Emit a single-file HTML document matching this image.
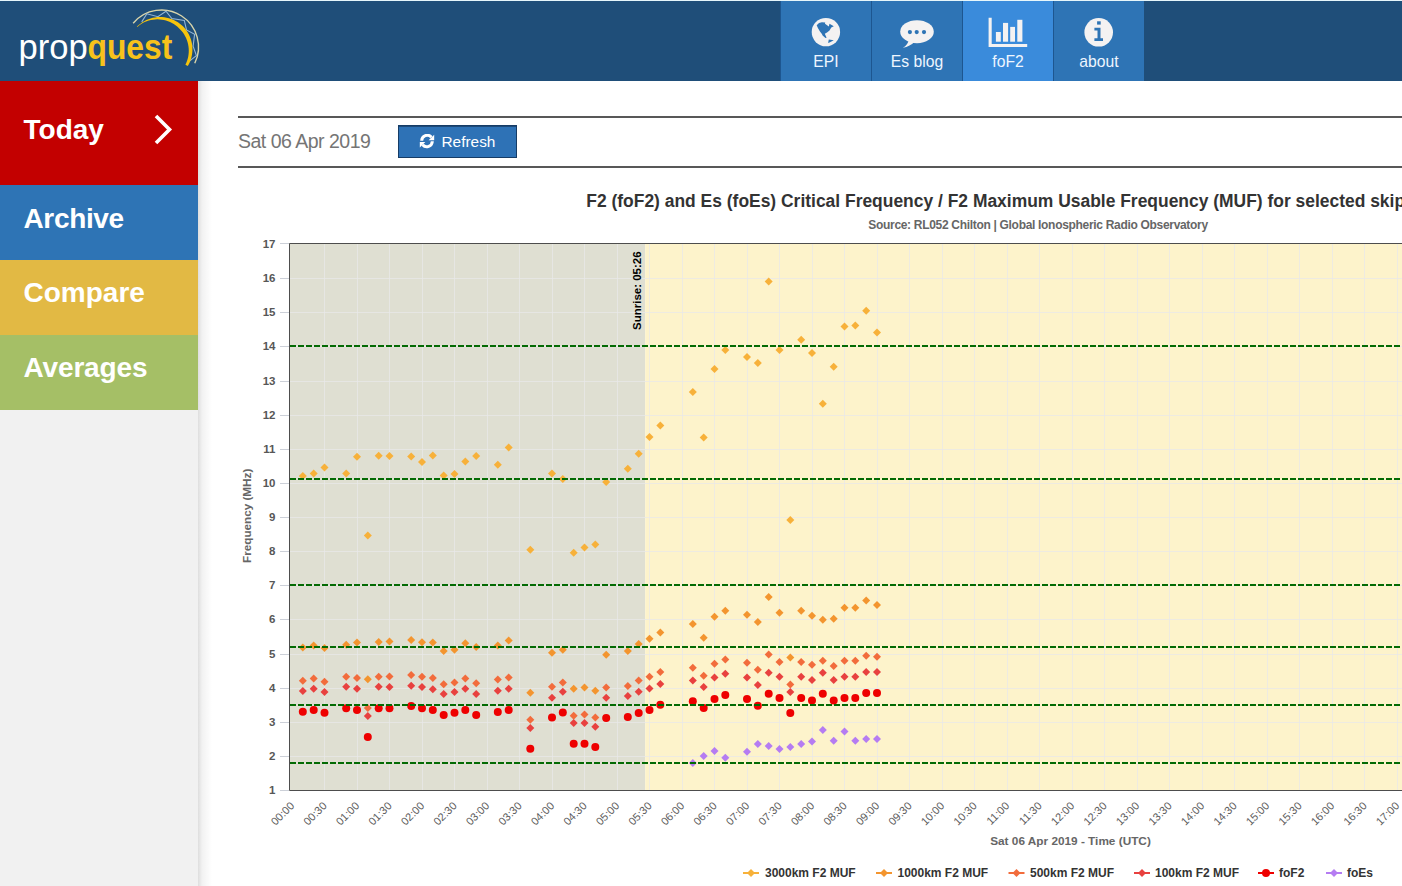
<!DOCTYPE html>
<html><head><meta charset="utf-8">
<style>
*{margin:0;padding:0;box-sizing:border-box}
html,body{width:1402px;height:886px;overflow:hidden;background:#fff;font-family:"Liberation Sans",sans-serif}
#top{position:absolute;left:0;top:0;width:1402px;height:1px;background:#e6f6fb}
#hdr{position:absolute;left:0;top:1px;width:1402px;height:80px;background:#1f4e79}
.nav{position:absolute;top:1px;height:80px;width:91px;background:#2e74b5;border-left:1px solid #1d5690;color:#eef6ff;text-align:center}
.nav.act{background:#3a8bdb}
.nav span{position:absolute;left:0;right:0;top:52px;font-size:15.7px;line-height:18px}
.nav svg{position:absolute;left:0;top:-1px}
#side{position:absolute;left:0;top:81px;width:198px;height:805px;background:#f1f1f1}
.sb{position:absolute;left:0;width:198px;color:#fff;font-weight:bold;font-size:29px}
.sb span{position:absolute;left:24px}
#shadow{position:absolute;left:198px;top:81px;width:14px;height:805px;background:linear-gradient(to right,rgba(0,0,0,0.13),rgba(0,0,0,0.05) 30%,rgba(0,0,0,0))}
#rule1{position:absolute;left:238px;top:116px;width:1164px;height:2px;background:#585858}
#rule2{position:absolute;left:238px;top:166px;width:1164px;height:2px;background:#585858}
#date{position:absolute;left:238px;top:130px;font-size:19px;color:#757575;line-height:22px}
#btn{position:absolute;left:398px;top:125px;width:119px;height:33px;background:#2e72b6;border:1px solid #163c66;box-shadow:inset 0 1px 0 #1d4a7a;color:#fff;font-size:16.5px}
#btn span{position:absolute;left:42px;top:7px;line-height:18px}
#chart{position:absolute;left:0;top:0}
</style></head><body>
<div id="top"></div>
<div id="hdr"></div>
<svg style="position:absolute;left:0;top:0" width="240" height="81">
 <text x="18.45" y="59" font-size="34.6" fill="#fff" font-family="Liberation Sans">prop</text>
 <text transform="translate(87.5,59) scale(1,1.1)" font-size="31.8" font-weight="bold" fill="#f7c21b" font-family="Liberation Sans">quest</text>
 <path d="M133.16 23.22 A37 37 0 0 1 194.76 63.22" stroke="#e3dcae" stroke-width="1.4" fill="none" opacity="0.95"/>
<path d="M141.7 21.9 L146.9 13.8 L157.9 16.7 L166 11.2 L171.8 18.6 L184.3 20.4 L186.5 29.9 L194.6 34.3 L193.1 46.1 L196.4 55.6 L188 62.2" stroke="#93b6d6" stroke-width="1.1" fill="none"/>
<path d="M136.91 26.52 L138.62 25.04 L140.43 23.67 L142.27 22.33 L144.22 21.14 L146.25 20.08 L148.37 19.18 L150.54 18.42 L152.78 17.82 L155.06 17.39 L157.36 17.11 L159.69 17.01 L162.03 17.06 L164.36 17.29 L166.68 17.68 L168.97 18.24 L171.21 18.96 L173.41 19.84 L175.54 20.88 L177.60 22.07 L179.58 23.41 L181.45 24.88 L183.23 26.49 L184.82 28.28 L186.29 30.18 L187.61 32.17 L188.78 34.26 L189.80 36.42 L190.66 38.66 L191.35 40.94 L191.88 43.27 L192.23 45.63 L192.41 48.00 L192.42 50.38 L192.26 52.75 L191.93 55.10 L191.42 57.41 L190.76 59.68 L189.93 61.89 L188.94 64.02 L187.81 66.08 L185.42 64.76 L186.32 62.80 L187.09 60.80 L187.71 58.76 L188.20 56.68 L188.53 54.58 L188.73 52.46 L188.77 50.34 L188.67 48.23 L188.43 46.13 L188.05 44.05 L187.52 42.01 L186.86 40.01 L186.06 38.06 L185.13 36.18 L184.07 34.36 L182.90 32.62 L181.60 30.97 L180.20 29.41 L178.74 27.89 L177.18 26.47 L175.52 25.17 L173.76 23.98 L171.92 22.92 L170.01 21.99 L168.02 21.19 L165.99 20.53 L163.90 20.01 L161.78 19.64 L159.63 19.42 L157.46 19.35 L155.29 19.43 L153.12 19.66 L150.97 20.05 L148.84 20.58 L146.75 21.27 L144.70 22.10 L142.71 23.07 L140.78 24.17 L139.00 25.50 L137.32 26.96Z" fill="#f6c40c"/>
</svg>
<div class="nav" style="left:780px">
 <svg width="91" height="80"><circle cx="44.9" cy="32.1" r="14.2" fill="#f4f2f2"/>
 <path d="M35.7 25.2 L38 23 L40.9 22.3 L44.2 22.5 L44 23.8 L47.8 26.5 L48.5 23.8 L52.8 26.3 L50.3 27.6 L48.5 30.4 L46 32.6 L43.8 33.7 L45.6 37.7 L44.5 38 L41.6 35.5 L40.9 34.1 L38.8 31.2 L36.9 27.9 Z M47.8 39.5 L52.8 40.2 L48.5 42.4 L47.1 43.1 Z" fill="#2e74b5"/></svg>
 <span>EPI</span></div>
<div class="nav" style="left:871px">
 <svg width="91" height="80"><ellipse cx="45" cy="31.7" rx="16.8" ry="11.5" fill="#f4f2f2"/>
 <path d="M30.9 47.8 Q36 45 37 39 L43 41.5 Q38 46.5 30.9 47.8 Z" fill="#f4f2f2"/>
 <circle cx="37.9" cy="32.1" r="2.1" fill="#2e74b5"/><circle cx="44.7" cy="32.1" r="2.1" fill="#2e74b5"/><circle cx="52" cy="32.1" r="2.1" fill="#2e74b5"/></svg>
 <span>Es blog</span></div>
<div class="nav act" style="left:962px">
 <svg width="91" height="80"><path d="M25.6 17.8 H28.7 V43.9 H64.2 V47 H25.6 Z" fill="#f4f2f2"/>
 <rect x="32.9" y="32" width="4.9" height="9.7" fill="#f4f2f2"/><rect x="40" y="22.9" width="5.1" height="18.8" fill="#f4f2f2"/><rect x="47.2" y="26.9" width="4.8" height="14.8" fill="#f4f2f2"/><rect x="54.3" y="19.8" width="5.1" height="21.9" fill="#f4f2f2"/></svg>
 <span>foF2</span></div>
<div class="nav" style="left:1053px">
 <svg width="91" height="80"><circle cx="44.7" cy="32.3" r="14.3" fill="#f4f2f2"/>
 <rect x="43.1" y="21.3" width="3.6" height="3.3" fill="#2e74b5"/><path d="M40.4 27.8 H46.5 V38.2 H49 V40.9 H40.4 V38.2 H43.5 V30.5 H40.4 Z" fill="#2e74b5"/></svg>
 <span>about</span></div>
<div id="side"></div>
<div class="sb" style="top:81px;height:104px;background:#c30000"></div>
<div class="sb" style="top:185px;height:75px;background:#2e74b5"></div>
<div class="sb" style="top:260px;height:75px;background:#e2b944"></div>
<div class="sb" style="top:335px;height:75px;background:#a5bf66"></div>
<svg style="position:absolute;left:0;top:0" width="200" height="420" font-family="Liberation Sans" font-weight="bold" font-size="28" fill="#fff">
 <text x="23.5" y="139">Today</text>
 <text x="23.5" y="228" letter-spacing="-0.35">Archive</text>
 <text x="23.5" y="302">Compare</text>
 <text x="23.5" y="377" letter-spacing="-0.15">Averages</text>
 <path d="M156 116 L169.5 129.5 L156 143" stroke="#fff" stroke-width="3.6" fill="none"/>
</svg>
<div id="shadow"></div>
<div id="rule1"></div>
<svg style="position:absolute;left:0;top:0" width="400" height="170"><text x="238" y="147.8" font-size="19.5" letter-spacing="-0.5" fill="#757575" font-family="Liberation Sans">Sat 06 Apr 2019</text></svg>
<div id="btn"><svg style="position:absolute;left:20px;top:8px" width="16" height="16"><path d="M2.7 6.8 A5.5 5.5 0 0 1 12.4 3.27" stroke="#fff" stroke-width="3" fill="none"/><path d="M15.2 0.8 V6.2 H9.6 Z" fill="#fff"/><path d="M13.3 7.2 A5.5 5.5 0 0 1 3.59 10.73" stroke="#fff" stroke-width="3" fill="none"/><path d="M0.8 13.4 V7.9 H6.4 Z" fill="#fff"/></svg><svg style="position:absolute;left:0;top:0" width="119" height="33"><text x="42.5" y="21.2" font-size="15.4" fill="#fff" font-family="Liberation Sans">Refresh</text></svg></div>
<div id="rule2"></div>
<svg id="chart" width="1402" height="886" font-family="Liberation Sans">
<rect x="289" y="243" width="356.2" height="547" fill="#dfdfd2"/>
<rect x="645.2" y="243" width="766.8" height="547" fill="#fdf3cb"/>
<path d="M289 756.5H1412 M289 722.5H1412 M289 688.5H1412 M289 654.5H1412 M289 619.5H1412 M289 585.5H1412 M289 551.5H1412 M289 517.5H1412 M289 483.5H1412 M289 449.5H1412 M289 415.5H1412 M289 381.5H1412 M289 346.5H1412 M289 312.5H1412 M289 278.5H1412 M324.5 243V790 M357.5 243V790 M389.5 243V790 M422.5 243V790 M454.5 243V790 M487.5 243V790 M519.5 243V790 M552.5 243V790 M584.5 243V790 M617.5 243V790 M649.5 243V790 M682.5 243V790 M714.5 243V790 M747.5 243V790 M779.5 243V790 M812.5 243V790 M844.5 243V790 M877.5 243V790 M909.5 243V790 M942.5 243V790 M974.5 243V790 M1007.5 243V790 M1039.5 243V790 M1072.5 243V790 M1104.5 243V790 M1137.5 243V790 M1169.5 243V790 M1202.5 243V790 M1234.5 243V790 M1267.5 243V790 M1299.5 243V790 M1332.5 243V790 M1364.5 243V790 M1397.5 243V790 M1429.5 243V790" stroke="#e8e8e8" stroke-width="1" fill="none" opacity="0.75"/>
<text transform="translate(641,330) rotate(-90)" font-size="11.5" font-weight="bold" fill="#000">Sunrise: 05:26</text>
<path d="M302.8 472.0L306.8 476.0L302.8 480.0L298.8 476.0Z" fill="#f7b13a"/>
<path d="M313.7 469.6L317.7 473.6L313.7 477.6L309.7 473.6Z" fill="#f7b13a"/>
<path d="M324.5 463.6L328.5 467.6L324.5 471.6L320.5 467.6Z" fill="#f7b13a"/>
<path d="M346.2 469.6L350.2 473.6L346.2 477.6L342.2 473.6Z" fill="#f7b13a"/>
<path d="M357.0 452.7L361.0 456.7L357.0 460.7L353.0 456.7Z" fill="#f7b13a"/>
<path d="M367.8 531.6L371.8 535.6L367.8 539.6L363.8 535.6Z" fill="#f7b13a"/>
<path d="M378.7 451.7L382.7 455.7L378.7 459.7L374.7 455.7Z" fill="#f7b13a"/>
<path d="M389.5 452.1L393.5 456.1L389.5 460.1L385.5 456.1Z" fill="#f7b13a"/>
<path d="M411.2 452.4L415.2 456.4L411.2 460.4L407.2 456.4Z" fill="#f7b13a"/>
<path d="M422.0 458.0L426.0 462.0L422.0 466.0L418.0 462.0Z" fill="#f7b13a"/>
<path d="M432.8 451.6L436.8 455.6L432.8 459.6L428.8 455.6Z" fill="#f7b13a"/>
<path d="M443.7 471.6L447.7 475.6L443.7 479.6L439.7 475.6Z" fill="#f7b13a"/>
<path d="M454.5 469.9L458.5 473.9L454.5 477.9L450.5 473.9Z" fill="#f7b13a"/>
<path d="M465.3 457.6L469.3 461.6L465.3 465.6L461.3 461.6Z" fill="#f7b13a"/>
<path d="M476.2 452.0L480.2 456.0L476.2 460.0L472.2 456.0Z" fill="#f7b13a"/>
<path d="M497.8 460.8L501.8 464.8L497.8 468.8L493.8 464.8Z" fill="#f7b13a"/>
<path d="M508.7 443.4L512.7 447.4L508.7 451.4L504.7 447.4Z" fill="#f7b13a"/>
<path d="M530.3 545.7L534.3 549.7L530.3 553.7L526.3 549.7Z" fill="#f7b13a"/>
<path d="M552.0 469.6L556.0 473.6L552.0 477.6L548.0 473.6Z" fill="#f7b13a"/>
<path d="M562.8 475.0L566.8 479.0L562.8 483.0L558.8 479.0Z" fill="#f7b13a"/>
<path d="M573.7 548.7L577.7 552.7L573.7 556.7L569.7 552.7Z" fill="#f7b13a"/>
<path d="M584.5 543.5L588.5 547.5L584.5 551.5L580.5 547.5Z" fill="#f7b13a"/>
<path d="M595.3 540.6L599.3 544.6L595.3 548.6L591.3 544.6Z" fill="#f7b13a"/>
<path d="M606.2 478.1L610.2 482.1L606.2 486.1L602.2 482.1Z" fill="#f7b13a"/>
<path d="M627.8 464.8L631.8 468.8L627.8 472.8L623.8 468.8Z" fill="#f7b13a"/>
<path d="M638.7 449.7L642.7 453.7L638.7 457.7L634.7 453.7Z" fill="#f7b13a"/>
<path d="M649.5 433.0L653.5 437.0L649.5 441.0L645.5 437.0Z" fill="#f7b13a"/>
<path d="M660.3 421.6L664.3 425.6L660.3 429.6L656.3 425.6Z" fill="#f7b13a"/>
<path d="M692.8 388.0L696.8 392.0L692.8 396.0L688.8 392.0Z" fill="#f7b13a"/>
<path d="M703.7 433.6L707.7 437.6L703.7 441.6L699.7 437.6Z" fill="#f7b13a"/>
<path d="M714.5 365.0L718.5 369.0L714.5 373.0L710.5 369.0Z" fill="#f7b13a"/>
<path d="M725.3 346.1L729.3 350.1L725.3 354.1L721.3 350.1Z" fill="#f7b13a"/>
<path d="M747.0 353.0L751.0 357.0L747.0 361.0L743.0 357.0Z" fill="#f7b13a"/>
<path d="M757.8 359.0L761.8 363.0L757.8 367.0L753.8 363.0Z" fill="#f7b13a"/>
<path d="M768.7 277.5L772.7 281.5L768.7 285.5L764.7 281.5Z" fill="#f7b13a"/>
<path d="M779.5 346.1L783.5 350.1L779.5 354.1L775.5 350.1Z" fill="#f7b13a"/>
<path d="M790.3 515.9L794.3 519.9L790.3 523.9L786.3 519.9Z" fill="#f7b13a"/>
<path d="M801.2 335.8L805.2 339.8L801.2 343.8L797.2 339.8Z" fill="#f7b13a"/>
<path d="M812.0 348.9L816.0 352.9L812.0 356.9L808.0 352.9Z" fill="#f7b13a"/>
<path d="M822.8 399.7L826.8 403.7L822.8 407.7L818.8 403.7Z" fill="#f7b13a"/>
<path d="M833.7 362.8L837.7 366.8L833.7 370.8L829.7 366.8Z" fill="#f7b13a"/>
<path d="M844.5 322.5L848.5 326.5L844.5 330.5L840.5 326.5Z" fill="#f7b13a"/>
<path d="M855.3 321.4L859.3 325.4L855.3 329.4L851.3 325.4Z" fill="#f7b13a"/>
<path d="M866.2 306.8L870.2 310.8L866.2 314.8L862.2 310.8Z" fill="#f7b13a"/>
<path d="M877.0 328.5L881.0 332.5L877.0 336.5L873.0 332.5Z" fill="#f7b13a"/>
<path d="M302.8 643.6L306.8 647.6L302.8 651.6L298.8 647.6Z" fill="#f3952f"/>
<path d="M313.7 641.5L317.7 645.5L313.7 649.5L309.7 645.5Z" fill="#f3952f"/>
<path d="M324.5 643.9L328.5 647.9L324.5 651.9L320.5 647.9Z" fill="#f3952f"/>
<path d="M346.2 640.7L350.2 644.7L346.2 648.7L342.2 644.7Z" fill="#f3952f"/>
<path d="M357.0 638.6L361.0 642.6L357.0 646.6L353.0 642.6Z" fill="#f3952f"/>
<path d="M367.8 675.3L371.8 679.3L367.8 683.3L363.8 679.3Z" fill="#f3952f"/>
<path d="M378.7 637.9L382.7 641.9L378.7 645.9L374.7 641.9Z" fill="#f3952f"/>
<path d="M389.5 637.5L393.5 641.5L389.5 645.5L385.5 641.5Z" fill="#f3952f"/>
<path d="M411.2 636.1L415.2 640.1L411.2 644.1L407.2 640.1Z" fill="#f3952f"/>
<path d="M422.0 638.2L426.0 642.2L422.0 646.2L418.0 642.2Z" fill="#f3952f"/>
<path d="M432.8 638.6L436.8 642.6L432.8 646.6L428.8 642.6Z" fill="#f3952f"/>
<path d="M443.7 647.1L447.7 651.1L443.7 655.1L439.7 651.1Z" fill="#f3952f"/>
<path d="M454.5 645.7L458.5 649.7L454.5 653.7L450.5 649.7Z" fill="#f3952f"/>
<path d="M465.3 639.3L469.3 643.3L465.3 647.3L461.3 643.3Z" fill="#f3952f"/>
<path d="M476.2 643.0L480.2 647.0L476.2 651.0L472.2 647.0Z" fill="#f3952f"/>
<path d="M497.8 641.6L501.8 645.6L497.8 649.6L493.8 645.6Z" fill="#f3952f"/>
<path d="M508.7 636.5L512.7 640.5L508.7 644.5L504.7 640.5Z" fill="#f3952f"/>
<path d="M530.3 688.8L534.3 692.8L530.3 696.8L526.3 692.8Z" fill="#f3952f"/>
<path d="M552.0 648.7L556.0 652.7L552.0 656.7L548.0 652.7Z" fill="#f3952f"/>
<path d="M562.8 645.7L566.8 649.7L562.8 653.7L558.8 649.7Z" fill="#f3952f"/>
<path d="M573.7 684.7L577.7 688.7L573.7 692.7L569.7 688.7Z" fill="#f3952f"/>
<path d="M584.5 683.5L588.5 687.5L584.5 691.5L580.5 687.5Z" fill="#f3952f"/>
<path d="M595.3 686.8L599.3 690.8L595.3 694.8L591.3 690.8Z" fill="#f3952f"/>
<path d="M606.2 650.7L610.2 654.7L606.2 658.7L602.2 654.7Z" fill="#f3952f"/>
<path d="M627.8 646.9L631.8 650.9L627.8 654.9L623.8 650.9Z" fill="#f3952f"/>
<path d="M638.7 640.0L642.7 644.0L638.7 648.0L634.7 644.0Z" fill="#f3952f"/>
<path d="M649.5 634.7L653.5 638.7L649.5 642.7L645.5 638.7Z" fill="#f3952f"/>
<path d="M660.3 628.6L664.3 632.6L660.3 636.6L656.3 632.6Z" fill="#f3952f"/>
<path d="M692.8 619.9L696.8 623.9L692.8 627.9L688.8 623.9Z" fill="#f3952f"/>
<path d="M703.7 633.7L707.7 637.7L703.7 641.7L699.7 637.7Z" fill="#f3952f"/>
<path d="M714.5 612.8L718.5 616.8L714.5 620.8L710.5 616.8Z" fill="#f3952f"/>
<path d="M725.3 606.7L729.3 610.7L725.3 614.7L721.3 610.7Z" fill="#f3952f"/>
<path d="M747.0 610.8L751.0 614.8L747.0 618.8L743.0 614.8Z" fill="#f3952f"/>
<path d="M757.8 617.9L761.8 621.9L757.8 625.9L753.8 621.9Z" fill="#f3952f"/>
<path d="M768.7 593.1L772.7 597.1L768.7 601.1L764.7 597.1Z" fill="#f3952f"/>
<path d="M779.5 608.7L783.5 612.7L779.5 616.7L775.5 612.7Z" fill="#f3952f"/>
<path d="M790.3 653.6L794.3 657.6L790.3 661.6L786.3 657.6Z" fill="#f3952f"/>
<path d="M801.2 606.7L805.2 610.7L801.2 614.7L797.2 610.7Z" fill="#f3952f"/>
<path d="M812.0 611.8L816.0 615.8L812.0 619.8L808.0 615.8Z" fill="#f3952f"/>
<path d="M822.8 615.8L826.8 619.8L822.8 623.8L818.8 619.8Z" fill="#f3952f"/>
<path d="M833.7 614.8L837.7 618.8L833.7 622.8L829.7 618.8Z" fill="#f3952f"/>
<path d="M844.5 603.7L848.5 607.7L844.5 611.7L840.5 607.7Z" fill="#f3952f"/>
<path d="M855.3 603.7L859.3 607.7L855.3 611.7L851.3 607.7Z" fill="#f3952f"/>
<path d="M866.2 596.5L870.2 600.5L866.2 604.5L862.2 600.5Z" fill="#f3952f"/>
<path d="M877.0 601.0L881.0 605.0L877.0 609.0L873.0 605.0Z" fill="#f3952f"/>
<path d="M302.8 676.7L306.8 680.7L302.8 684.7L298.8 680.7Z" fill="#f26c3c"/>
<path d="M313.7 674.6L317.7 678.6L313.7 682.6L309.7 678.6Z" fill="#f26c3c"/>
<path d="M324.5 677.7L328.5 681.7L324.5 685.7L320.5 681.7Z" fill="#f26c3c"/>
<path d="M346.2 672.8L350.2 676.8L346.2 680.8L342.2 676.8Z" fill="#f26c3c"/>
<path d="M357.0 673.9L361.0 677.9L357.0 681.9L353.0 677.9Z" fill="#f26c3c"/>
<path d="M367.8 704.0L371.8 708.0L367.8 712.0L363.8 708.0Z" fill="#f26c3c"/>
<path d="M378.7 672.8L382.7 676.8L378.7 680.8L374.7 676.8Z" fill="#f26c3c"/>
<path d="M389.5 672.5L393.5 676.5L389.5 680.5L385.5 676.5Z" fill="#f26c3c"/>
<path d="M411.2 671.1L415.2 675.1L411.2 679.1L407.2 675.1Z" fill="#f26c3c"/>
<path d="M422.0 672.8L426.0 676.8L422.0 680.8L418.0 676.8Z" fill="#f26c3c"/>
<path d="M432.8 673.9L436.8 677.9L432.8 681.9L428.8 677.9Z" fill="#f26c3c"/>
<path d="M443.7 680.2L447.7 684.2L443.7 688.2L439.7 684.2Z" fill="#f26c3c"/>
<path d="M454.5 678.6L458.5 682.6L454.5 686.6L450.5 682.6Z" fill="#f26c3c"/>
<path d="M465.3 674.6L469.3 678.6L465.3 682.6L461.3 678.6Z" fill="#f26c3c"/>
<path d="M476.2 679.2L480.2 683.2L476.2 687.2L472.2 683.2Z" fill="#f26c3c"/>
<path d="M497.8 675.5L501.8 679.5L497.8 683.5L493.8 679.5Z" fill="#f26c3c"/>
<path d="M508.7 673.6L512.7 677.6L508.7 681.6L504.7 677.6Z" fill="#f26c3c"/>
<path d="M530.3 715.8L534.3 719.8L530.3 723.8L526.3 719.8Z" fill="#f26c3c"/>
<path d="M552.0 682.7L556.0 686.7L552.0 690.7L548.0 686.7Z" fill="#f26c3c"/>
<path d="M562.8 678.6L566.8 682.6L562.8 686.6L558.8 682.6Z" fill="#f26c3c"/>
<path d="M573.7 711.7L577.7 715.7L573.7 719.7L569.7 715.7Z" fill="#f26c3c"/>
<path d="M584.5 710.6L588.5 714.6L584.5 718.6L580.5 714.6Z" fill="#f26c3c"/>
<path d="M595.3 713.6L599.3 717.6L595.3 721.6L591.3 717.6Z" fill="#f26c3c"/>
<path d="M606.2 683.5L610.2 687.5L606.2 691.5L602.2 687.5Z" fill="#f26c3c"/>
<path d="M627.8 682.0L631.8 686.0L627.8 690.0L623.8 686.0Z" fill="#f26c3c"/>
<path d="M638.7 676.6L642.7 680.6L638.7 684.6L634.7 680.6Z" fill="#f26c3c"/>
<path d="M649.5 672.7L653.5 676.7L649.5 680.7L645.5 676.7Z" fill="#f26c3c"/>
<path d="M660.3 667.9L664.3 671.9L660.3 675.9L656.3 671.9Z" fill="#f26c3c"/>
<path d="M692.8 663.8L696.8 667.8L692.8 671.8L688.8 667.8Z" fill="#f26c3c"/>
<path d="M703.7 671.8L707.7 675.8L703.7 679.8L699.7 675.8Z" fill="#f26c3c"/>
<path d="M714.5 659.7L718.5 663.7L714.5 667.7L710.5 663.7Z" fill="#f26c3c"/>
<path d="M725.3 655.5L729.3 659.5L725.3 663.5L721.3 659.5Z" fill="#f26c3c"/>
<path d="M747.0 658.8L751.0 662.8L747.0 666.8L743.0 662.8Z" fill="#f26c3c"/>
<path d="M757.8 665.7L761.8 669.7L757.8 673.7L753.8 669.7Z" fill="#f26c3c"/>
<path d="M768.7 650.5L772.7 654.5L768.7 658.5L764.7 654.5Z" fill="#f26c3c"/>
<path d="M779.5 657.9L783.5 661.9L779.5 665.9L775.5 661.9Z" fill="#f26c3c"/>
<path d="M790.3 680.5L794.3 684.5L790.3 688.5L786.3 684.5Z" fill="#f26c3c"/>
<path d="M801.2 657.9L805.2 661.9L801.2 665.9L797.2 661.9Z" fill="#f26c3c"/>
<path d="M812.0 660.7L816.0 664.7L812.0 668.7L808.0 664.7Z" fill="#f26c3c"/>
<path d="M822.8 656.8L826.8 660.8L822.8 664.8L818.8 660.8Z" fill="#f26c3c"/>
<path d="M833.7 662.0L837.7 666.0L833.7 670.0L829.7 666.0Z" fill="#f26c3c"/>
<path d="M844.5 656.8L848.5 660.8L844.5 664.8L840.5 660.8Z" fill="#f26c3c"/>
<path d="M855.3 656.8L859.3 660.8L855.3 664.8L851.3 660.8Z" fill="#f26c3c"/>
<path d="M866.2 651.8L870.2 655.8L866.2 659.8L862.2 655.8Z" fill="#f26c3c"/>
<path d="M877.0 652.7L881.0 656.7L877.0 660.7L873.0 656.7Z" fill="#f26c3c"/>
<path d="M302.8 687.0L306.8 691.0L302.8 695.0L298.8 691.0Z" fill="#e8413f"/>
<path d="M313.7 684.8L317.7 688.8L313.7 692.8L309.7 688.8Z" fill="#e8413f"/>
<path d="M324.5 688.0L328.5 692.0L324.5 696.0L320.5 692.0Z" fill="#e8413f"/>
<path d="M346.2 682.8L350.2 686.8L346.2 690.8L342.2 686.8Z" fill="#e8413f"/>
<path d="M357.0 684.8L361.0 688.8L357.0 692.8L353.0 688.8Z" fill="#e8413f"/>
<path d="M367.8 712.0L371.8 716.0L367.8 720.0L363.8 716.0Z" fill="#e8413f"/>
<path d="M378.7 682.8L382.7 686.8L378.7 690.8L374.7 686.8Z" fill="#e8413f"/>
<path d="M389.5 683.1L393.5 687.1L389.5 691.1L385.5 687.1Z" fill="#e8413f"/>
<path d="M411.2 681.7L415.2 685.7L411.2 689.7L407.2 685.7Z" fill="#e8413f"/>
<path d="M422.0 683.1L426.0 687.1L422.0 691.1L418.0 687.1Z" fill="#e8413f"/>
<path d="M432.8 685.2L436.8 689.2L432.8 693.2L428.8 689.2Z" fill="#e8413f"/>
<path d="M443.7 690.1L447.7 694.1L443.7 698.1L439.7 694.1Z" fill="#e8413f"/>
<path d="M454.5 688.0L458.5 692.0L454.5 696.0L450.5 692.0Z" fill="#e8413f"/>
<path d="M465.3 684.8L469.3 688.8L465.3 692.8L461.3 688.8Z" fill="#e8413f"/>
<path d="M476.2 689.9L480.2 693.9L476.2 697.9L472.2 693.9Z" fill="#e8413f"/>
<path d="M497.8 686.8L501.8 690.8L497.8 694.8L493.8 690.8Z" fill="#e8413f"/>
<path d="M508.7 684.7L512.7 688.7L508.7 692.7L504.7 688.7Z" fill="#e8413f"/>
<path d="M530.3 723.9L534.3 727.9L530.3 731.9L526.3 727.9Z" fill="#e8413f"/>
<path d="M552.0 693.8L556.0 697.8L552.0 701.8L548.0 697.8Z" fill="#e8413f"/>
<path d="M562.8 687.7L566.8 691.7L562.8 695.7L558.8 691.7Z" fill="#e8413f"/>
<path d="M573.7 719.0L577.7 723.0L573.7 727.0L569.7 723.0Z" fill="#e8413f"/>
<path d="M584.5 719.0L588.5 723.0L584.5 727.0L580.5 723.0Z" fill="#e8413f"/>
<path d="M595.3 722.8L599.3 726.8L595.3 730.8L591.3 726.8Z" fill="#e8413f"/>
<path d="M606.2 693.8L610.2 697.8L606.2 701.8L602.2 697.8Z" fill="#e8413f"/>
<path d="M627.8 691.9L631.8 695.9L627.8 699.9L623.8 695.9Z" fill="#e8413f"/>
<path d="M638.7 687.7L642.7 691.7L638.7 695.7L634.7 691.7Z" fill="#e8413f"/>
<path d="M649.5 684.6L653.5 688.6L649.5 692.6L645.5 688.6Z" fill="#e8413f"/>
<path d="M660.3 680.0L664.3 684.0L660.3 688.0L656.3 684.0Z" fill="#e8413f"/>
<path d="M692.8 676.4L696.8 680.4L692.8 684.4L688.8 680.4Z" fill="#e8413f"/>
<path d="M703.7 682.9L707.7 686.9L703.7 690.9L699.7 686.9Z" fill="#e8413f"/>
<path d="M714.5 673.6L718.5 677.6L714.5 681.6L710.5 677.6Z" fill="#e8413f"/>
<path d="M725.3 669.8L729.3 673.8L725.3 677.8L721.3 673.8Z" fill="#e8413f"/>
<path d="M747.0 673.6L751.0 677.6L747.0 681.6L743.0 677.6Z" fill="#e8413f"/>
<path d="M757.8 680.9L761.8 684.9L757.8 688.9L753.8 684.9Z" fill="#e8413f"/>
<path d="M768.7 668.8L772.7 672.8L768.7 676.8L764.7 672.8Z" fill="#e8413f"/>
<path d="M779.5 672.7L783.5 676.7L779.5 680.7L775.5 676.7Z" fill="#e8413f"/>
<path d="M790.3 687.9L794.3 691.9L790.3 695.9L786.3 691.9Z" fill="#e8413f"/>
<path d="M801.2 672.7L805.2 676.7L801.2 680.7L797.2 676.7Z" fill="#e8413f"/>
<path d="M812.0 675.9L816.0 679.9L812.0 683.9L808.0 679.9Z" fill="#e8413f"/>
<path d="M822.8 668.8L826.8 672.8L822.8 676.8L818.8 672.8Z" fill="#e8413f"/>
<path d="M833.7 675.9L837.7 679.9L833.7 683.9L829.7 679.9Z" fill="#e8413f"/>
<path d="M844.5 672.7L848.5 676.7L844.5 680.7L840.5 676.7Z" fill="#e8413f"/>
<path d="M855.3 672.7L859.3 676.7L855.3 680.7L851.3 676.7Z" fill="#e8413f"/>
<path d="M866.2 667.9L870.2 671.9L866.2 675.9L862.2 671.9Z" fill="#e8413f"/>
<path d="M877.0 667.9L881.0 671.9L877.0 675.9L873.0 671.9Z" fill="#e8413f"/>
<circle cx="302.8" cy="711.8" r="4" fill="#ee0000"/>
<circle cx="313.7" cy="709.9" r="4" fill="#ee0000"/>
<circle cx="324.5" cy="712.7" r="4" fill="#ee0000"/>
<circle cx="346.2" cy="708.2" r="4" fill="#ee0000"/>
<circle cx="357.0" cy="709.9" r="4" fill="#ee0000"/>
<circle cx="367.8" cy="736.9" r="4" fill="#ee0000"/>
<circle cx="378.7" cy="708.2" r="4" fill="#ee0000"/>
<circle cx="389.5" cy="708.2" r="4" fill="#ee0000"/>
<circle cx="411.2" cy="706.1" r="4" fill="#ee0000"/>
<circle cx="422.0" cy="708.2" r="4" fill="#ee0000"/>
<circle cx="432.8" cy="709.9" r="4" fill="#ee0000"/>
<circle cx="443.7" cy="714.9" r="4" fill="#ee0000"/>
<circle cx="454.5" cy="712.7" r="4" fill="#ee0000"/>
<circle cx="465.3" cy="709.9" r="4" fill="#ee0000"/>
<circle cx="476.2" cy="714.9" r="4" fill="#ee0000"/>
<circle cx="497.8" cy="711.9" r="4" fill="#ee0000"/>
<circle cx="508.7" cy="710.0" r="4" fill="#ee0000"/>
<circle cx="530.3" cy="748.7" r="4" fill="#ee0000"/>
<circle cx="552.0" cy="717.6" r="4" fill="#ee0000"/>
<circle cx="562.8" cy="712.6" r="4" fill="#ee0000"/>
<circle cx="573.7" cy="743.8" r="4" fill="#ee0000"/>
<circle cx="584.5" cy="743.8" r="4" fill="#ee0000"/>
<circle cx="595.3" cy="746.9" r="4" fill="#ee0000"/>
<circle cx="606.2" cy="718.0" r="4" fill="#ee0000"/>
<circle cx="627.8" cy="716.9" r="4" fill="#ee0000"/>
<circle cx="638.7" cy="712.9" r="4" fill="#ee0000"/>
<circle cx="649.5" cy="709.9" r="4" fill="#ee0000"/>
<circle cx="660.3" cy="704.7" r="4" fill="#ee0000"/>
<circle cx="692.8" cy="701.2" r="4" fill="#ee0000"/>
<circle cx="703.7" cy="708.1" r="4" fill="#ee0000"/>
<circle cx="714.5" cy="699.0" r="4" fill="#ee0000"/>
<circle cx="725.3" cy="694.9" r="4" fill="#ee0000"/>
<circle cx="747.0" cy="699.0" r="4" fill="#ee0000"/>
<circle cx="757.8" cy="705.8" r="4" fill="#ee0000"/>
<circle cx="768.7" cy="693.8" r="4" fill="#ee0000"/>
<circle cx="779.5" cy="697.9" r="4" fill="#ee0000"/>
<circle cx="790.3" cy="712.9" r="4" fill="#ee0000"/>
<circle cx="801.2" cy="697.9" r="4" fill="#ee0000"/>
<circle cx="812.0" cy="700.6" r="4" fill="#ee0000"/>
<circle cx="822.8" cy="693.8" r="4" fill="#ee0000"/>
<circle cx="833.7" cy="700.6" r="4" fill="#ee0000"/>
<circle cx="844.5" cy="697.9" r="4" fill="#ee0000"/>
<circle cx="855.3" cy="697.9" r="4" fill="#ee0000"/>
<circle cx="866.2" cy="692.9" r="4" fill="#ee0000"/>
<circle cx="877.0" cy="692.9" r="4" fill="#ee0000"/>
<path d="M692.8 759.0L696.8 763.0L692.8 767.0L688.8 763.0Z" fill="#b57cf2"/>
<path d="M703.7 751.9L707.7 755.9L703.7 759.9L699.7 755.9Z" fill="#b57cf2"/>
<path d="M714.5 746.9L718.5 750.9L714.5 754.9L710.5 750.9Z" fill="#b57cf2"/>
<path d="M725.3 753.8L729.3 757.8L725.3 761.8L721.3 757.8Z" fill="#b57cf2"/>
<path d="M747.0 747.8L751.0 751.8L747.0 755.8L743.0 751.8Z" fill="#b57cf2"/>
<path d="M757.8 739.9L761.8 743.9L757.8 747.9L753.8 743.9Z" fill="#b57cf2"/>
<path d="M768.7 742.1L772.7 746.1L768.7 750.1L764.7 746.1Z" fill="#b57cf2"/>
<path d="M779.5 744.9L783.5 748.9L779.5 752.9L775.5 748.9Z" fill="#b57cf2"/>
<path d="M790.3 743.0L794.3 747.0L790.3 751.0L786.3 747.0Z" fill="#b57cf2"/>
<path d="M801.2 739.9L805.2 743.9L801.2 747.9L797.2 743.9Z" fill="#b57cf2"/>
<path d="M812.0 737.6L816.0 741.6L812.0 745.6L808.0 741.6Z" fill="#b57cf2"/>
<path d="M822.8 726.0L826.8 730.0L822.8 734.0L818.8 730.0Z" fill="#b57cf2"/>
<path d="M833.7 736.7L837.7 740.7L833.7 744.7L829.7 740.7Z" fill="#b57cf2"/>
<path d="M844.5 727.4L848.5 731.4L844.5 735.4L840.5 731.4Z" fill="#b57cf2"/>
<path d="M855.3 736.7L859.3 740.7L855.3 744.7L851.3 740.7Z" fill="#b57cf2"/>
<path d="M866.2 734.9L870.2 738.9L866.2 742.9L862.2 738.9Z" fill="#b57cf2"/>
<path d="M877.0 734.9L881.0 738.9L877.0 742.9L873.0 738.9Z" fill="#b57cf2"/>
<path d="M290 346H1412" stroke="#036a03" stroke-width="2" stroke-dasharray="6,2" fill="none"/>
<path d="M290 479H1412" stroke="#036a03" stroke-width="2" stroke-dasharray="6,2" fill="none"/>
<path d="M290 585H1412" stroke="#036a03" stroke-width="2" stroke-dasharray="6,2" fill="none"/>
<path d="M290 647H1412" stroke="#036a03" stroke-width="2" stroke-dasharray="6,2" fill="none"/>
<path d="M290 705H1412" stroke="#036a03" stroke-width="2" stroke-dasharray="6,2" fill="none"/>
<path d="M290 763H1412" stroke="#036a03" stroke-width="2" stroke-dasharray="6,2" fill="none"/>
<path d="M1412 243.5H289.5V790.5H1412" stroke="#4d4d4d" stroke-width="1" fill="none"/>
<path d="M280 790.5H289" stroke="#ccd0d8" stroke-width="1"/>
<text x="275.5" y="794.2" text-anchor="end" font-size="11.5" font-weight="bold" fill="#575757">1</text>
<path d="M280 756.5H289" stroke="#ccd0d8" stroke-width="1"/>
<text x="275.5" y="760.2" text-anchor="end" font-size="11.5" font-weight="bold" fill="#575757">2</text>
<path d="M280 722.5H289" stroke="#ccd0d8" stroke-width="1"/>
<text x="275.5" y="726.2" text-anchor="end" font-size="11.5" font-weight="bold" fill="#575757">3</text>
<path d="M280 688.5H289" stroke="#ccd0d8" stroke-width="1"/>
<text x="275.5" y="692.2" text-anchor="end" font-size="11.5" font-weight="bold" fill="#575757">4</text>
<path d="M280 654.5H289" stroke="#ccd0d8" stroke-width="1"/>
<text x="275.5" y="658.2" text-anchor="end" font-size="11.5" font-weight="bold" fill="#575757">5</text>
<path d="M280 619.5H289" stroke="#ccd0d8" stroke-width="1"/>
<text x="275.5" y="623.2" text-anchor="end" font-size="11.5" font-weight="bold" fill="#575757">6</text>
<path d="M280 585.5H289" stroke="#ccd0d8" stroke-width="1"/>
<text x="275.5" y="589.2" text-anchor="end" font-size="11.5" font-weight="bold" fill="#575757">7</text>
<path d="M280 551.5H289" stroke="#ccd0d8" stroke-width="1"/>
<text x="275.5" y="555.2" text-anchor="end" font-size="11.5" font-weight="bold" fill="#575757">8</text>
<path d="M280 517.5H289" stroke="#ccd0d8" stroke-width="1"/>
<text x="275.5" y="521.2" text-anchor="end" font-size="11.5" font-weight="bold" fill="#575757">9</text>
<path d="M280 483.5H289" stroke="#ccd0d8" stroke-width="1"/>
<text x="275.5" y="487.2" text-anchor="end" font-size="11.5" font-weight="bold" fill="#575757">10</text>
<path d="M280 449.5H289" stroke="#ccd0d8" stroke-width="1"/>
<text x="275.5" y="453.2" text-anchor="end" font-size="11.5" font-weight="bold" fill="#575757">11</text>
<path d="M280 415.5H289" stroke="#ccd0d8" stroke-width="1"/>
<text x="275.5" y="419.2" text-anchor="end" font-size="11.5" font-weight="bold" fill="#575757">12</text>
<path d="M280 381.5H289" stroke="#ccd0d8" stroke-width="1"/>
<text x="275.5" y="385.2" text-anchor="end" font-size="11.5" font-weight="bold" fill="#575757">13</text>
<path d="M280 346.5H289" stroke="#ccd0d8" stroke-width="1"/>
<text x="275.5" y="350.2" text-anchor="end" font-size="11.5" font-weight="bold" fill="#575757">14</text>
<path d="M280 312.5H289" stroke="#ccd0d8" stroke-width="1"/>
<text x="275.5" y="316.2" text-anchor="end" font-size="11.5" font-weight="bold" fill="#575757">15</text>
<path d="M280 278.5H289" stroke="#ccd0d8" stroke-width="1"/>
<text x="275.5" y="282.2" text-anchor="end" font-size="11.5" font-weight="bold" fill="#575757">16</text>
<path d="M280 243.5H289" stroke="#ccd0d8" stroke-width="1"/>
<text x="275.5" y="248.2" text-anchor="end" font-size="11.5" font-weight="bold" fill="#575757">17</text>
<text transform="translate(251.3,515.8) rotate(-90)" text-anchor="middle" font-size="11.7" font-weight="bold" fill="#666">Frequency (MHz)</text>
<text transform="translate(295.0,806.5) rotate(-45)" text-anchor="end" font-size="11" fill="#5c5c5c">00:00</text>
<text transform="translate(327.5,806.5) rotate(-45)" text-anchor="end" font-size="11" fill="#5c5c5c">00:30</text>
<text transform="translate(360.0,806.5) rotate(-45)" text-anchor="end" font-size="11" fill="#5c5c5c">01:00</text>
<text transform="translate(392.5,806.5) rotate(-45)" text-anchor="end" font-size="11" fill="#5c5c5c">01:30</text>
<text transform="translate(425.0,806.5) rotate(-45)" text-anchor="end" font-size="11" fill="#5c5c5c">02:00</text>
<text transform="translate(457.5,806.5) rotate(-45)" text-anchor="end" font-size="11" fill="#5c5c5c">02:30</text>
<text transform="translate(490.0,806.5) rotate(-45)" text-anchor="end" font-size="11" fill="#5c5c5c">03:00</text>
<text transform="translate(522.5,806.5) rotate(-45)" text-anchor="end" font-size="11" fill="#5c5c5c">03:30</text>
<text transform="translate(555.0,806.5) rotate(-45)" text-anchor="end" font-size="11" fill="#5c5c5c">04:00</text>
<text transform="translate(587.5,806.5) rotate(-45)" text-anchor="end" font-size="11" fill="#5c5c5c">04:30</text>
<text transform="translate(620.0,806.5) rotate(-45)" text-anchor="end" font-size="11" fill="#5c5c5c">05:00</text>
<text transform="translate(652.5,806.5) rotate(-45)" text-anchor="end" font-size="11" fill="#5c5c5c">05:30</text>
<text transform="translate(685.0,806.5) rotate(-45)" text-anchor="end" font-size="11" fill="#5c5c5c">06:00</text>
<text transform="translate(717.5,806.5) rotate(-45)" text-anchor="end" font-size="11" fill="#5c5c5c">06:30</text>
<text transform="translate(750.0,806.5) rotate(-45)" text-anchor="end" font-size="11" fill="#5c5c5c">07:00</text>
<text transform="translate(782.5,806.5) rotate(-45)" text-anchor="end" font-size="11" fill="#5c5c5c">07:30</text>
<text transform="translate(815.0,806.5) rotate(-45)" text-anchor="end" font-size="11" fill="#5c5c5c">08:00</text>
<text transform="translate(847.5,806.5) rotate(-45)" text-anchor="end" font-size="11" fill="#5c5c5c">08:30</text>
<text transform="translate(880.0,806.5) rotate(-45)" text-anchor="end" font-size="11" fill="#5c5c5c">09:00</text>
<text transform="translate(912.5,806.5) rotate(-45)" text-anchor="end" font-size="11" fill="#5c5c5c">09:30</text>
<text transform="translate(945.0,806.5) rotate(-45)" text-anchor="end" font-size="11" fill="#5c5c5c">10:00</text>
<text transform="translate(977.5,806.5) rotate(-45)" text-anchor="end" font-size="11" fill="#5c5c5c">10:30</text>
<text transform="translate(1010.0,806.5) rotate(-45)" text-anchor="end" font-size="11" fill="#5c5c5c">11:00</text>
<text transform="translate(1042.5,806.5) rotate(-45)" text-anchor="end" font-size="11" fill="#5c5c5c">11:30</text>
<text transform="translate(1075.0,806.5) rotate(-45)" text-anchor="end" font-size="11" fill="#5c5c5c">12:00</text>
<text transform="translate(1107.5,806.5) rotate(-45)" text-anchor="end" font-size="11" fill="#5c5c5c">12:30</text>
<text transform="translate(1140.0,806.5) rotate(-45)" text-anchor="end" font-size="11" fill="#5c5c5c">13:00</text>
<text transform="translate(1172.5,806.5) rotate(-45)" text-anchor="end" font-size="11" fill="#5c5c5c">13:30</text>
<text transform="translate(1205.0,806.5) rotate(-45)" text-anchor="end" font-size="11" fill="#5c5c5c">14:00</text>
<text transform="translate(1237.5,806.5) rotate(-45)" text-anchor="end" font-size="11" fill="#5c5c5c">14:30</text>
<text transform="translate(1270.0,806.5) rotate(-45)" text-anchor="end" font-size="11" fill="#5c5c5c">15:00</text>
<text transform="translate(1302.5,806.5) rotate(-45)" text-anchor="end" font-size="11" fill="#5c5c5c">15:30</text>
<text transform="translate(1335.0,806.5) rotate(-45)" text-anchor="end" font-size="11" fill="#5c5c5c">16:00</text>
<text transform="translate(1367.5,806.5) rotate(-45)" text-anchor="end" font-size="11" fill="#5c5c5c">16:30</text>
<text transform="translate(1400.0,806.5) rotate(-45)" text-anchor="end" font-size="11" fill="#5c5c5c">17:00</text>
<text x="1070.5" y="845" text-anchor="middle" font-size="11.8" font-weight="bold" fill="#666">Sat 06 Apr 2019 - Time (UTC)</text>
<text x="586.3" y="206.7" font-size="17.45" font-weight="bold" fill="#333">F2 (foF2) and Es (foEs) Critical Frequency / F2 Maximum Usable Frequency (MUF) for selected skip distances</text>
<text x="868.3" y="228.8" font-size="12" letter-spacing="-0.31" font-weight="bold" fill="#666">Source: RL052 Chilton | Global Ionospheric Radio Observatory</text>
<path d="M743 873H759" stroke="#f7b13a" stroke-width="2"/>
<path d="M751.0 869.0L755.0 873.0L751.0 877.0L747.0 873.0Z" fill="#f7b13a"/>
<text x="765" y="877" font-size="12" font-weight="bold" fill="#333">3000km F2 MUF</text>
<path d="M876 873H892" stroke="#f3952f" stroke-width="2"/>
<path d="M884.0 869.0L888.0 873.0L884.0 877.0L880.0 873.0Z" fill="#f3952f"/>
<text x="897.5" y="877" font-size="12" font-weight="bold" fill="#333">1000km F2 MUF</text>
<path d="M1008.5 873H1024.5" stroke="#f26c3c" stroke-width="2"/>
<path d="M1016.5 869.0L1020.5 873.0L1016.5 877.0L1012.5 873.0Z" fill="#f26c3c"/>
<text x="1030" y="877" font-size="12" font-weight="bold" fill="#333">500km F2 MUF</text>
<path d="M1134 873H1150" stroke="#e8413f" stroke-width="2"/>
<path d="M1142.0 869.0L1146.0 873.0L1142.0 877.0L1138.0 873.0Z" fill="#e8413f"/>
<text x="1155" y="877" font-size="12" font-weight="bold" fill="#333">100km F2 MUF</text>
<path d="M1258 873H1274" stroke="#ee0000" stroke-width="2"/>
<circle cx="1266.0" cy="873.0" r="4" fill="#ee0000"/>
<text x="1279" y="877" font-size="12" font-weight="bold" fill="#333">foF2</text>
<path d="M1326 873H1342" stroke="#b57cf2" stroke-width="2"/>
<path d="M1334.0 869.0L1338.0 873.0L1334.0 877.0L1330.0 873.0Z" fill="#b57cf2"/>
<text x="1347" y="877" font-size="12" font-weight="bold" fill="#333">foEs</text>
</svg>
</body></html>
